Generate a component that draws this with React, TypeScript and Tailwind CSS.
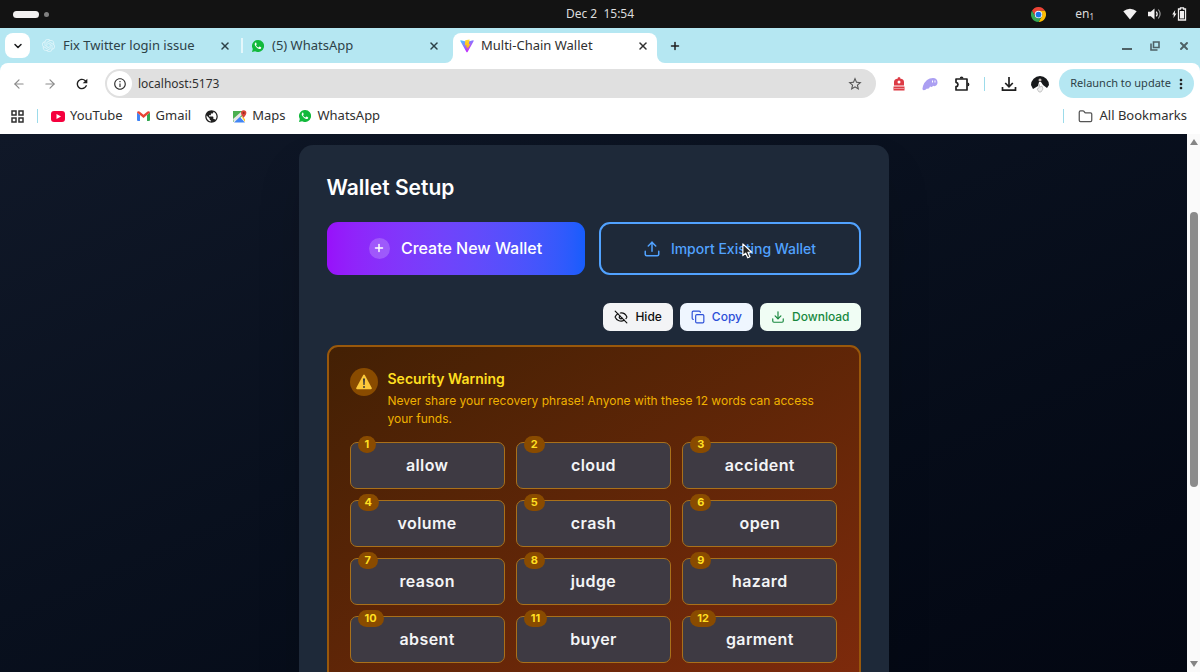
import React from 'react';
import { Copy, Download, EyeOff, Upload, Folder, X, Plus, ChevronDown, ArrowLeft, ArrowRight } from 'lucide-react';
import { MdRefresh, MdInfoOutline, MdStarOutline, MdMoreVert, MdPublic } from 'react-icons/md';
import { SiOpenai } from 'react-icons/si';

const words = ['allow', 'cloud', 'accident', 'volume', 'crash', 'open', 'reason', 'judge', 'hazard', 'absent', 'buyer', 'garment'];

function WhatsApp() {
  return (
    <svg className="size-3 shrink-0" viewBox="0 0 24 24" aria-hidden="true">
      <path fill="#12b93c" d="M12 0a12 12 0 0 0-10.400 18L0 24l6.200-1.600A12 12 0 1 0 12 0Z" />
      <path fill="#fff" d="M8.500 5.800c-.4-.8-1.500-.7-2.100 0-1.500 1.700-1.100 3.800.1 5.800 1.900 3.200 4.500 5.400 7.800 6.400 2 .6 3.900-.5 4.200-2.600 0-.5-.1-.7-.6-1l-2.400-1.200c-.4-.2-.7-.1-1 .2l-1 1.300c-.2.3-.5.3-.9.1-2-.9-3.400-2.200-4.400-4-.2-.3-.1-.6.100-.8l.9-1.100c.2-.3.200-.6.100-.9Z" />
    </svg>
  );
}

function ViteLogo() {
  return (
    <svg className="size-[14px] shrink-0" viewBox="0 0 32 32" aria-hidden="true">
      <defs>
        <linearGradient id="vite-v" x1="0" y1="0" x2="0.7" y2="1">
          <stop offset="0" stopColor="#41d1ff" />
          <stop offset="0.8" stopColor="#bd34fe" />
        </linearGradient>
        <linearGradient id="vite-bolt" x1="0" y1="0" x2="0" y2="1">
          <stop offset="0" stopColor="#ffdd35" />
          <stop offset="1" stopColor="#ffa800" />
        </linearGradient>
      </defs>
      <path fill="url(#vite-v)" d="M31 5 17 30q-1 1-2 0L1 5q-1-2 1-2l14 3 14-3q2 0 1 2Z" />
      <path fill="url(#vite-bolt)" d="M22 1 12 3l-1 12 4-1-1 6 4-1-2 7 8-15-4 1 2-11Z" />
    </svg>
  );
}

function Chrome() {
  return (
    <svg className="size-[15px]" viewBox="0 0 48 48" aria-hidden="true">
      <path fill="#ea4335" d="M3.200 12a24 24 0 0 1 41.600 0H24a12 12 0 0 0-10.400 18Z" />
      <path fill="#fbbc04" d="M44.800 12A24 24 0 0 1 24 48l10.400-18A12 12 0 0 0 24 12Z" />
      <path fill="#34a853" d="M3.200 12 13.600 30A12 12 0 0 0 34.400 30L24 48A24 24 0 0 1 3.200 12Z" />
      <circle cx="24" cy="24" r="12" fill="#fff" />
      <circle cx="24" cy="24" r="9.200" fill="#1a73e8" />
    </svg>
  );
}

function Tab({ icon, title, className }: { icon: React.ReactNode; title: string; className: string }) {
  return (
    <div className={className}>
      {icon}
      <span className="grow truncate">{title}</span>
      <button aria-label={`Close ${title}`}>
        <X className="size-3" strokeWidth={3} />
      </button>
    </div>
  );
}

function SystemBar() {
  return (
    <header className="grid h-7 shrink-0 grid-cols-3 items-center bg-[#131313] pl-[13px] pr-[13px] text-xs text-[#dcdcdc]">
      <div className="flex items-center gap-[5px]">
        <span className="h-[7px] w-[26px] rounded-full bg-[#f3f1f1]" />
        <span className="size-[5px] rounded-full bg-[#808080]" />
      </div>
      <time className="whitespace-pre text-center">Dec 2  15:54</time>
      <div className="flex items-center justify-end">
        <Chrome />
        <span className="ml-[29px]">en<sub className="text-[8px]">1</sub></span>
        <svg className="ml-[29px] h-3 w-[14px]" viewBox="0 0 14 12" aria-label="Wi-Fi">
          <path fill="#f3f1f1" d="M7 11.500.3 3.300Q3.500.8 7 .8t6.700 2.500Z" />
        </svg>
        <svg className="ml-[11px] h-3 w-[14px]" viewBox="0 0 14 12" fill="none" aria-label="Volume">
          <path fill="#f3f1f1" d="M0 3.800h2.800L6.500.5v11L2.800 8.200H0Z" />
          <path stroke="#f3f1f1" strokeWidth="1.200" d="M8.300 3.600q1.800 2.400 0 4.800" />
          <path stroke="#9a9a9a" strokeWidth="1.200" d="M10.300 1.500q3.600 4.500 0 9" />
        </svg>
        <svg className="ml-[10px] h-[14px] w-[15px]" viewBox="0 0 15 14" fill="none" aria-label="Battery charging">
          <path fill="#f3f1f1" d="M3.200 3 .2 7.500h1.600L1.500 11l3-4.500H2.800Z" />
          <path stroke="#f3f1f1" strokeWidth="1.300" d="M6.500 2h2V.8h3V2h2v11h-7Z" />
          <path fill="#f3f1f1" d="M8 4h4v7.500H8Z" />
        </svg>
      </div>
    </header>
  );
}

function TabStrip() {
  return (
    <div className="flex h-[35px] shrink-0 bg-[#b5e7f2] pl-[5px] text-[13px] text-[#2d4248]">
      <button className="mt-[5px] flex size-[25px] items-center justify-center rounded-lg bg-white text-[#1b1c1d]" aria-label="Search tabs">
        <ChevronDown className="size-3" strokeWidth={3} />
      </button>
      <Tab className="flex w-[211px] items-center gap-[8px] pl-3 pr-[10px]" icon={<SiOpenai className="size-[13px] shrink-0 text-[#e0f5fa]" />} title="Fix Twitter login issue" />
      <span className="mt-[10px] h-[15px] w-[2px] bg-[#e4f7fb]" />
      <Tab className="flex w-[202px] items-center gap-[8px] pl-[9px] pr-[5px]" icon={<WhatsApp />} title="(5) WhatsApp" />
      <div className="flex">
        <div className="w-2 self-stretch bg-linear-to-b from-[#b5e7f2] from-50% to-white to-50%">
          <span className="block h-full w-2 rounded-br-lg bg-[#b5e7f2]" />
        </div>
        <Tab className="mt-[5px] flex w-[204px] items-center gap-[7px] rounded-t-lg bg-white pl-[7px] pr-2 pb-[5px] text-[#303030]" icon={<ViteLogo />} title="Multi-Chain Wallet" />
        <div className="w-2 self-stretch bg-linear-to-b from-[#b5e7f2] from-50% to-white to-50%">
          <span className="block h-full w-2 rounded-bl-lg bg-[#b5e7f2]" />
        </div>
      </div>
      <button className="ml-[2px] px-0.5 text-[#202020]" aria-label="New tab">
        <Plus className="size-3" strokeWidth={3} />
      </button>
      <div className="ml-auto flex items-center gap-[18px] pr-[10px] text-[#4e6166]">
        <button aria-label="Minimize" className="flex h-3 w-[10px] items-end pb-[2px]"><span className="h-[2px] w-full bg-[#4e6166]" /></button>
        <button aria-label="Restore">
          <svg className="size-[10px]" viewBox="0 0 10 10" fill="none" stroke="#4e6166" strokeWidth="1.600"><path d="M3.500 1h5.500v5.500H3.500ZM1 2.500V9h6.500" /></svg>
        </button>
        <button aria-label="Close window"><X className="size-3" strokeWidth={4} /></button>
      </div>
    </div>
  );
}

function Toolbar() {
  return (
    <div className="bg-[#b5e7f2]">
      <div className="flex h-[41px] items-center rounded-t-lg bg-white pl-3 pr-[6px]">
        <nav className="flex items-center gap-[17px] text-[#8b8b8b]">
          <button aria-label="Back"><ArrowLeft className="size-[14px]" /></button>
          <button aria-label="Forward"><ArrowRight className="size-[14px]" /></button>
          <button aria-label="Reload" className="text-[#202020]"><MdRefresh className="size-4" /></button>
        </nav>
        <form className="ml-[15px] flex h-[29px] min-w-0 grow items-center rounded-full bg-[#e0e0e0] pl-[2px] pr-[13px] text-xs text-[#303030]">
          <label htmlFor="address" aria-label="Address" className="flex size-[25px] shrink-0 items-center justify-center rounded-full bg-white"><MdInfoOutline className="size-[14px]" /></label>
          <input id="address" className="ml-[6px] h-5 min-w-0 grow bg-transparent outline-none" defaultValue="localhost:5173" />
          <button type="button" aria-label="Bookmark this page"><MdStarOutline className="size-4 text-[#555]" /></button>
        </form>
        <div className="ml-[16px] flex items-center text-[#202020]">
          <svg className="size-[14px]" viewBox="0 0 14 14" aria-hidden="true">
            <path fill="#dd3b45" d="M2 8.500V5Q2 2.200 5.500 1.800L6 .3h2l.5 1.500Q12 2.200 12 5v3.500ZM1.500 9.500h11v4h-11Z" />
            <circle cx="7" cy="5" r="1.500" fill="#fff" />
            <path stroke="#f3a4a9" strokeWidth=".8" d="M2 11.500h10" />
          </svg>
          <svg className="ml-[16px] h-[14px] w-4" viewBox="0 0 16 14" aria-hidden="true">
            <path fill="#ab9ff2" d="M1 13q-1-1 0-4Q4 1 11 1q4 0 4.500 4 .2 3-2.500 4-1 .4-2-.2-1 2-3 .8-1 2.800-3 2-2 2-4 1.400Z" />
            <path fill="#fff" d="M10 3.500h1v2h-1Zm2.500 0h1v2h-1Z" />
          </svg>
          <svg className="ml-[16px] size-4" viewBox="0 0 16 16" aria-label="Extensions">
            <path fill="none" stroke="#202020" strokeWidth="1.700" strokeLinejoin="round" d="M2 3h11v11H2v-3.300q2-.4 2-2.200T2 6.300Z" />
            <path fill="#202020" d="M5.700 2.500a1.900 1.900 0 0 1 3.800 0ZM13.500 6.500a1.900 1.900 0 0 1 0 3.800Z" />
          </svg>
          <span className="ml-[14px] h-[14px] w-px bg-[#9cdbea]" />
          <svg className="ml-[16px] size-4" viewBox="0 0 16 16" fill="none" stroke="#202020" strokeWidth="1.700" aria-label="Downloads">
            <path d="M8 1v9.500M4.200 7 8 10.800 11.800 7M1.500 11v3.200h13V11" />
          </svg>
          <svg className="ml-[14px] size-[18px]" viewBox="0 0 18 18" aria-hidden="true">
            <path fill="#17191b" d="M0 10a9 9 0 0 1 18 0l-2 3-4-3-2-3H8l-1 4-5 3Z" />
            <circle cx="9" cy="5" r="1.500" fill="#c9bdb9" />
            <path fill="#eee" stroke="#aaa" strokeWidth=".6" d="m8 9 1 3 2-1 1 3-2 3H8l-2-3 2-1Z" />
          </svg>
          <button className="ml-[10px] flex h-[29px] items-center gap-[2px] rounded-full bg-[#b5e7f2] pl-[11px] pr-[5px] text-[11px] text-[#2d4248]">
            Relaunch to update
            <MdMoreVert className="size-4 text-[#202020]" />
          </button>
        </div>
      </div>
    </div>
  );
}

function Bookmarks() {
  return (
    <nav className="flex h-[30px] shrink-0 items-center bg-white pb-[6px] pl-[11px] pr-[13px] text-[13px] text-[#303030]">
      <svg className="size-[13px]" viewBox="0 0 13 13" fill="none" stroke="#303030" strokeWidth="1.500" aria-hidden="true">
        <path d="M1 1h4v4H1ZM8 1h4v4H8ZM1 8h4v4H1ZM8 8h4v4H8Z" />
      </svg>
      <span className="ml-[13px] h-[14px] w-px bg-[#9cdbea]" />
      <a href="#youtube" className="ml-[13px] flex items-center gap-[5px]">
        <svg className="h-[11px] w-[14px]" viewBox="0 0 14 11" aria-hidden="true"><rect width="14" height="11" rx="3" fill="#f5003d" /><path fill="#fff" d="M5.500 3v5L10 5.500Z" /></svg>
        YouTube
      </a>
      <a href="#gmail" className="ml-[14px] flex items-center gap-[6px]">
        <svg className="h-[10px] w-[13px]" viewBox="0 0 13 10" aria-hidden="true">
          <path fill="#4285f4" d="M0 1.500 3 4v6H1q-1 0-1-1Z" /><path fill="#34a853" d="M10 4l3-2.500V9q0 1-1 1h-2Z" />
          <path fill="#ea4335" d="M0 1.500Q.5-.5 2.500.5l4 3.200 4-3.200q2-1 2.500 1L10 4 6.500 7 3 4Z" />
        </svg>
        Gmail
      </a>
      <a href="#globe" aria-label="Website" className="ml-[13px]"><MdPublic className="size-[15px] text-[#202020]" /></a>
      <a href="#maps" className="ml-[14px] flex items-center gap-[5px]">
        <svg className="h-[13px] w-[14px]" viewBox="0 0 14 13" aria-hidden="true">
          <path fill="#4caf50" d="M0 1h10v5L0 12Z" /><path fill="#4285f4" d="m6 6 6 6.500H1Z" /><path fill="#e7e7e7" d="m0 9 8-7 2 2-9 8.500Z" /><path fill="#ffca28" d="m8 6 4 3v3Z" />
          <path fill="#db4437" d="M10.500 8Q8 5 8 3a2.700 2.700 0 0 1 5.400 0q0 2-2.900 5Z" /><circle cx="10.700" cy="3" r="1" fill="#8e2b23" />
        </svg>
        Maps
      </a>
      <a href="#whatsapp" className="ml-[14px] flex items-center gap-[6px]"><WhatsApp />WhatsApp</a>
      <span className="ml-auto h-[14px] w-px bg-[#9cdbea]" />
      <a href="#all" className="ml-[14px] flex items-center gap-[6px]"><Folder className="size-[15px] text-[#555]" />All Bookmarks</a>
    </nav>
  );
}

function WalletSetup() {
  return (
    <section className="mx-auto mt-[11px] w-full max-w-[590px] rounded-[14px] bg-[#1e2939] p-7 shadow-2xl">
      <h2 className="mb-[19px] text-[21px] leading-[30px] font-semibold text-white">Wallet Setup</h2>
      <div className="relative flex gap-[14px]">
        <button className="flex h-[53px] flex-1 items-center justify-center gap-[11px] rounded-[11px] bg-linear-to-r from-[#9810fa] to-[#155dfc] px-6 pb-px text-base font-medium text-white">
          <span className="flex size-[21px] items-center justify-center rounded-full bg-white/20"><Plus className="size-3" strokeWidth={3} /></span>
          Create New Wallet
        </button>
        <button className="flex h-[53px] flex-1 items-center justify-center gap-[10px] rounded-[11px] border-2 border-[#51a2ff] px-6 text-sm font-medium text-[#51a2ff]">
          <Upload className="size-[18px]" />
          Import Existing Wallet
        </button>
        <svg className="absolute top-[20px] left-[415px] h-[18px] w-[11px]" viewBox="0 0 13 19" aria-hidden="true">
          <path fill="#222" stroke="#fff" strokeWidth="1.400" strokeLinejoin="round" d="M1 1v14l3.300-3 2.500 5.500 2.600-1.200L7 11h4.500Z" />
        </svg>
      </div>
      <div className="mt-7 flex justify-end gap-[7px] text-xs font-medium">
        <button className="flex h-7 items-center gap-[7px] rounded-[7px] bg-[#f3f4f6] px-[11px] text-[#101010]"><EyeOff className="size-[14px]" />Hide</button>
        <button className="flex h-7 items-center gap-[7px] rounded-[7px] bg-[#eff6ff] px-[11px] text-[#2b4fd8]"><Copy className="size-[14px]" />Copy</button>
        <button className="flex h-7 items-center gap-[7px] rounded-[7px] bg-[#f0fdf4] px-[11px] text-[#17883e]"><Download className="size-[14px]" />Download</button>
      </div>
      <div className="mt-[14px] rounded-[11px] border-2 border-[#99580b] bg-linear-to-br from-[#432004] to-[#7e2a0c] p-[21px]">
        <div className="mb-[14px] flex gap-[10px]">
          <span className="flex size-7 shrink-0 items-center justify-center rounded-full bg-[#894b00]">
            <svg className="size-4" viewBox="0 0 16 16" aria-label="Warning">
              <path fill="#fcc93a" d="M7.200 1q.8-1 1.600 0l7 13q.2 1.300-1 1.300H1.200Q0 15.300.2 14Z" />
              <path fill="#3b3b3b" d="M7 4.500h2L8.600 11H7.400Z" /><circle cx="8" cy="13" r="1" fill="#3b3b3b" />
            </svg>
          </span>
          <div>
            <h3 className="mb-[2px] text-sm leading-[22px] font-semibold text-[#ffdf20]">Security Warning</h3>
            <p className="text-xs leading-[18px] text-[#f0b100]">Never share your recovery phrase! Anyone with these 12 words can access your funds.</p>
          </div>
        </div>
        <ol className="grid grid-cols-3 gap-[11px]">
          {words.map((word, i) => (
            <li key={word} className="relative flex h-[47px] items-center justify-center rounded-[7px] border border-[#a9701a] bg-[#3e3a43] pb-[2px] text-base font-semibold tracking-wide text-[#f3f4f6]">
              <span className="absolute -top-[7px] left-[7px] rounded-full bg-[#894b00] px-[7px] text-[11px] leading-[17px] font-bold tracking-normal text-[#ffdf20]">{i + 1}</span>
              {word}
            </li>
          ))}
        </ol>
      </div>
    </section>
  );
}

export default function App() {
  return (
    <div className="flex h-screen flex-col overflow-hidden font-['Noto_Sans',sans-serif]">
      <SystemBar />
      <TabStrip />
      <Toolbar />
      <Bookmarks />
      <div className="flex min-h-0 grow">
        <main className="min-w-0 grow overflow-hidden bg-linear-to-br from-[#101828] to-[#030712] font-['Inter',sans-serif]">
          <WalletSetup />
        </main>
        <div className="flex w-[13px] flex-col items-center bg-[#fafafa] py-[5px]" aria-hidden="true">
          <svg className="h-[6px] w-2" viewBox="0 0 8 6"><path fill="#858585" d="m4 0 4 6H0Z" /></svg>
          <span className="mt-[67px] h-[52%] w-2 rounded-full bg-[#8b8b8b]" />
          <svg className="mt-auto h-[6px] w-2" viewBox="0 0 8 6"><path fill="#858585" d="m4 6 4-6H0Z" /></svg>
        </div>
      </div>
    </div>
  );
}
